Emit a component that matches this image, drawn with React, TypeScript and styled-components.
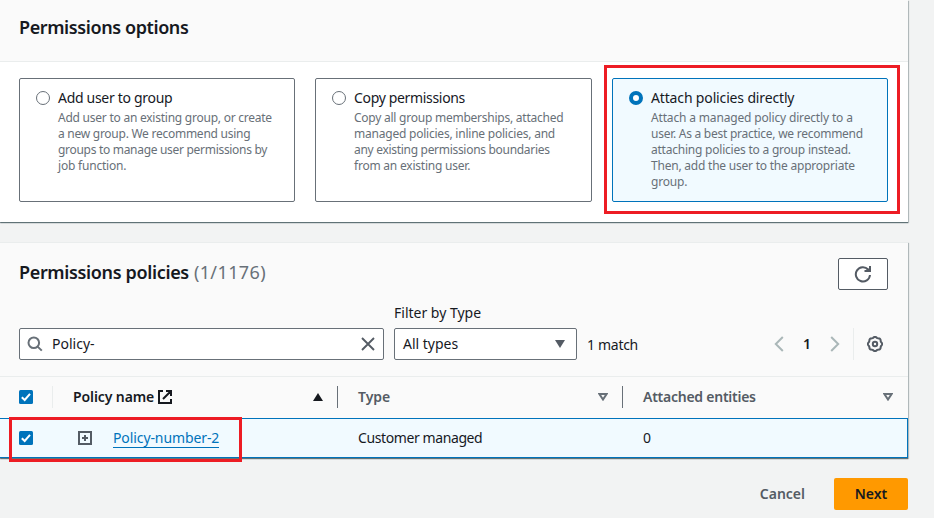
import React from "react";
import styled, { createGlobalStyle, css } from "styled-components";

const ink = "#16191f";
const grey = "#545b64";
const muted = "#687078";
const blue = "#0073bb";

const GlobalStyle = createGlobalStyle`
  * { box-sizing: border-box; }
  body {
    margin: 0;
    background: #f2f3f3;
    color: ${ink};
    font: 14px/22px "Noto Sans", "Open Sans", sans-serif;
    overflow: hidden;
  }
  svg { display: block; flex: none; }
`;

const Page = styled.main`
  display: flex;
  flex-direction: column;
  gap: 20px;
  width: 908px;
  height: 518px;
`;

const Card = styled.section`
  background: #fff;
  box-shadow: 0 1px 1px 0 rgba(0, 28, 36, 0.5), 1px 1px 1px 0 rgba(0, 28, 36, 0.2);
`;

const OptionsCard = styled(Card)`
  height: 222px;
`;

const PoliciesCard = styled(Card)`
  border-top: 1px solid #eaeded;
  height: 216px;
`;

const Label = styled.span<{ $ls?: number }>`
  letter-spacing: ${(p) => p.$ls ?? 0}px;
  white-space: nowrap;
`;

const Heading = styled.h2<{ $ls: number }>`
  margin: 0;
  font-size: 18px;
  font-weight: 600;
  line-height: 22px;
  letter-spacing: ${(p) => p.$ls}px;
  white-space: nowrap;
`;

const Counter = styled.span`
  margin-left: 5px;
  color: ${muted};
  font-weight: 400;
  letter-spacing: 0.4px;
`;

const OptionsHeader = styled.header`
  height: 62px;
  padding: 16px 19px 0;
  background: #fafafa;
  border-bottom: 1px solid #eaeded;
`;

const Tiles = styled.div`
  display: grid;
  grid-template-columns: 276px 277px 276px;
  gap: 20px;
  padding: 16px 20px 0 19px;
`;

const Tile = styled.div<{ $selected?: boolean }>`
  position: relative;
  display: flex;
  gap: 8px;
  height: 124px;
  padding: 8px 0 0 16px;
  border: 1px solid ${(p) => (p.$selected ? blue : muted)};
  border-radius: 2px;
  background: ${(p) => (p.$selected ? "#f1faff" : "#fff")};
`;

const Radio = styled.span<{ $checked?: boolean }>`
  flex: none;
  width: 14px;
  height: 14px;
  margin-top: 4px;
  border: 1px solid ${muted};
  border-radius: 50%;
  background: #fff;
  ${(p) => p.$checked && css`border: 4px solid ${blue};`}
`;

const TileText = styled.div`
  display: flex;
  flex-direction: column;
`;

const TileTitle = styled(Label)`
  height: 23px;
  line-height: 22px;
`;

const TileLine = styled(Label)`
  color: ${muted};
  font-size: 12px;
  line-height: 16px;
`;

const Marker = styled.span<{ $inset: string }>`
  position: absolute;
  inset: ${(p) => p.$inset};
  border: 3px solid #ed1c24;
  pointer-events: none;
`;

const PoliciesHeader = styled.header`
  height: 134px;
  background: #fafafa;
  border-bottom: 1px solid #eaeded;
  padding: 15px 20px 0 19px;
`;

const TitleRow = styled.div`
  display: flex;
  align-items: flex-start;
  justify-content: space-between;
  height: 44px;
`;

const TitleWrap = styled.div`
  padding-top: 3px;
`;

const IconButton = styled.button`
  display: flex;
  align-items: center;
  justify-content: center;
  width: 50px;
  height: 32px;
  padding: 0;
  border: 1px solid ${grey};
  border-radius: 2px;
  background: #fff;
`;

const Toolbar = styled.div`
  display: flex;
  align-items: flex-end;
  height: 58px;
`;

const Field = styled.div<{ $width: number; $pad: string }>`
  display: flex;
  align-items: center;
  width: ${(p) => p.$width}px;
  height: 32px;
  padding: ${(p) => p.$pad};
  border: 1px solid ${muted};
  border-radius: 2px;
  background: #fff;
`;

const Push = styled.span`
  flex: 1;
`;

const SearchValue = styled(Label)`
  margin-left: 9px;
`;

const Filter = styled.div`
  margin-left: 10px;
`;

const FilterLabel = styled.div`
  height: 26px;
`;

const Matches = styled(Label)`
  margin: 0 auto 4px 10px;
`;

const Pager = styled.div`
  display: flex;
  align-items: center;
  height: 32px;
`;

const PageNumber = styled.span`
  width: 46px;
  text-align: center;
  font-weight: 600;
`;

const Settings = styled.div`
  display: flex;
  align-items: center;
  height: 32px;
  margin-left: 13px;
  padding: 0 5px 0 13px;
  border-left: 1px solid #eaeded;
`;

const TableRow = styled.div`
  display: grid;
  grid-template-columns: 53px 285px 285px 285px;
`;

const HeadRow = styled(TableRow)`
  height: 41px;
  padding-top: 9px;
  background: #fafafa;
`;

const HeadCell = styled.div<{ $line?: string; $strong?: boolean }>`
  display: flex;
  align-items: center;
  height: 22px;
  padding: 0 14px 0 20px;
  border-right: 1px solid ${(p) => p.$line ?? "transparent"};
  color: ${(p) => (p.$strong ? ink : grey)};
  font-weight: 600;
`;

const CheckHead = styled(HeadCell)`
  padding: 0 0 0 19px;
`;

const ExternalWrap = styled.span`
  margin-left: 4px;
`;

const BodyRow = styled(TableRow)`
  position: relative;
  height: 40px;
  align-items: center;
  border: 1px solid ${blue};
  border-left: 0;
  background: #f1faff;
`;

const Cell = styled.div<{ $pad: number }>`
  display: flex;
  align-items: center;
  padding-left: ${(p) => p.$pad}px;
`;

const PolicyLink = styled.a`
  margin-left: 21px;
  border-bottom: 1px solid ${blue};
  color: ${blue};
  line-height: 19px;
  letter-spacing: -0.1px;
  white-space: nowrap;
`;

const Actions = styled.footer`
  display: flex;
  align-items: center;
  justify-content: flex-end;
  height: 32px;
`;

const Button = styled.button<{ $primary?: boolean }>`
  height: 32px;
  padding: 0;
  border: 0;
  border-radius: 2px;
  font: 600 14px/22px "Noto Sans", sans-serif;
  ${(p) =>
    p.$primary
      ? css`width: 74px; margin-left: 29px; background: #ff9900; color: ${ink};`
      : css`background: transparent; color: ${grey};`}
`;

const CheckedBox = () => (
  <svg width="14" height="14" viewBox="0 0 14 14">
    <rect width="14" height="14" rx="1.5" fill={blue} />
    <path d="M2.8 7.2 5.7 10 11 3.8" fill="none" stroke="#fff" strokeWidth="2" />
  </svg>
);

const SearchIcon = () => (
  <svg width="16" height="16" viewBox="0 0 16 16" fill="none" stroke={muted} strokeWidth="2">
    <circle cx="6.8" cy="6.8" r="5.3" />
    <path d="m10.6 10.6 4.2 4" />
  </svg>
);

const CloseIcon = () => (
  <svg width="14" height="14" viewBox="0 0 14 14" fill="none" stroke={grey} strokeWidth="1.9">
    <path d="m1 1 12 12M13 1 1 13" />
  </svg>
);

const RefreshIcon = () => (
  <svg width="18" height="18" viewBox="0 0 18 18" fill="none" stroke={grey} strokeWidth="2">
    <path d="M16 10A7.1 7.1 0 1 1 14.2 4.6" />
    <path d="M16 1v5h-5.5M13 3.5 15.5 6" />
  </svg>
);

const Chevron = ({ right }: { right?: boolean }) => (
  <svg width="10" height="16" viewBox="0 0 10 16" fill="none" stroke="#aab7b8" strokeWidth="2">
    <path d={right ? "m1.2 1 7 7-7 7" : "m8.8 1-7 7 7 7"} />
  </svg>
);

const gearPath = Array.from({ length: 65 }, (_, i) => {
  const a = (i / 64) * Math.PI * 2;
  const r = 6.75 + 0.45 * Math.cos(a * 8);
  return `${i ? "L" : "M"}${(8 + r * Math.cos(a)).toFixed(2)} ${(8 + r * Math.sin(a)).toFixed(2)}`;
}).join("");

const GearIcon = () => (
  <svg width="16" height="16" viewBox="0 0 16 16" fill="none" stroke={grey} strokeWidth="2">
    <path d={gearPath + "Z"} />
    <circle cx="8" cy="8" r="2.2" />
  </svg>
);

const Triangle = ({ kind }: { kind: "up" | "down" | "outline" }) => (
  <svg width="10" height="8" viewBox="0 0 10 8">
    {kind === "up" && <path d="M5 0 10 8H0Z" fill={ink} />}
    {kind === "down" && <path d="M0 0h10L5 8Z" fill={grey} />}
    {kind === "outline" && <path d="M1.4 1h7.2L5 6.5Z" fill="none" stroke={muted} strokeWidth="2" />}
  </svg>
);

const ExternalIcon = () => (
  <svg width="14" height="14" viewBox="0 0 14 14" fill="none" stroke={ink} strokeWidth="2">
    <path d="M5 1H1v12h12V9M8 1h5v5M13 1 5 9" />
  </svg>
);

const ExpandIcon = () => (
  <svg width="14" height="14" viewBox="0 0 14 14" fill="none" stroke={grey} strokeWidth="2">
    <path d="M1 1h12v12H1ZM7 4v6M4 7h6" />
  </svg>
);

type Line = [text: string, spacing: number];
type Option = { title: Line; lines: Line[]; selected?: boolean };

const options: Option[] = [
  {
    title: ["Add user to group", -0.3],
    lines: [
      ["Add user to an existing group, or create", -0.24],
      ["a new group. We recommend using", -0.26],
      ["groups to manage user permissions by", -0.3],
      ["job function.", -0.2],
    ],
  },
  {
    title: ["Copy permissions", -0.33],
    lines: [
      ["Copy all group memberships, attached", -0.24],
      ["managed policies, inline policies, and", -0.22],
      ["any existing permissions boundaries", -0.3],
      ["from an existing user.", -0.22],
    ],
  },
  {
    title: ["Attach policies directly", -0.15],
    selected: true,
    lines: [
      ["Attach a managed policy directly to a", -0.16],
      ["user. As a best practice, we recommend", -0.26],
      ["attaching policies to a group instead.", -0.22],
      ["Then, add the user to the appropriate", -0.22],
      ["group.", -0.2],
    ],
  },
];

export default function App() {
  return (
    <>
      <GlobalStyle />
      <Page>
        <OptionsCard>
          <OptionsHeader>
            <Heading $ls={-0.4}>Permissions options</Heading>
          </OptionsHeader>
          <Tiles>
            {options.map((o) => (
              <Tile key={o.title[0]} $selected={o.selected}>
                <Radio $checked={o.selected} />
                <TileText>
                  <TileTitle $ls={o.title[1]}>{o.title[0]}</TileTitle>
                  {o.lines.map(([text, ls]) => (
                    <TileLine key={text} $ls={ls}>{text}</TileLine>
                  ))}
                </TileText>
                {o.selected && <Marker $inset="-14px -13px -13px -9px" />}
              </Tile>
            ))}
          </Tiles>
        </OptionsCard>

        <PoliciesCard>
          <PoliciesHeader>
            <TitleRow>
              <TitleWrap>
                <Heading $ls={-0.35}>
                  Permissions policies<Counter>(1/1176)</Counter>
                </Heading>
              </TitleWrap>
              <IconButton aria-label="Refresh"><RefreshIcon /></IconButton>
            </TitleRow>
            <Toolbar>
              <Field $width={365} $pad="0 8px 0 7px">
                <SearchIcon />
                <SearchValue>Policy-</SearchValue>
                <Push />
                <CloseIcon />
              </Field>
              <Filter>
                <FilterLabel>Filter by Type</FilterLabel>
                <Field $width={183} $pad="0 11px 0 8px">
                  <Label>All types</Label>
                  <Push />
                  <Triangle kind="down" />
                </Field>
              </Filter>
              <Matches $ls={-0.3}>1 match</Matches>
              <Pager>
                <Chevron />
                <PageNumber>1</PageNumber>
                <Chevron right />
              </Pager>
              <Settings><GearIcon /></Settings>
            </Toolbar>
          </PoliciesHeader>
          <HeadRow>
            <CheckHead $line="#eaeded"><CheckedBox /></CheckHead>
            <HeadCell $line={muted} $strong>
              <Label $ls={-0.1}>Policy name</Label>
              <ExternalWrap><ExternalIcon /></ExternalWrap>
              <Push />
              <Triangle kind="up" />
            </HeadCell>
            <HeadCell $line={muted}>
              <Label>Type</Label>
              <Push />
              <Triangle kind="outline" />
            </HeadCell>
            <HeadCell>
              <Label $ls={-0.25}>Attached entities</Label>
              <Push />
              <Triangle kind="outline" />
            </HeadCell>
          </HeadRow>
          <BodyRow>
            <Cell $pad={19}><CheckedBox /></Cell>
            <Cell $pad={25}>
              <ExpandIcon />
              <PolicyLink>Policy-number-2</PolicyLink>
            </Cell>
            <Cell $pad={20}><Label $ls={-0.4}>Customer managed</Label></Cell>
            <Cell $pad={20}>0</Cell>
            <Marker $inset="-2px 665px -5px 9px" />
          </BodyRow>
        </PoliciesCard>

        <Actions>
          <Button>Cancel</Button>
          <Button $primary>Next</Button>
        </Actions>
      </Page>
    </>
  );
}
